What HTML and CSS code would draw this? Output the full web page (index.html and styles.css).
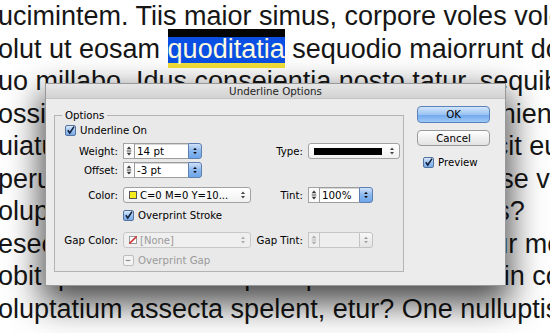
FILE: index.html
```html
<!DOCTYPE html>
<html lang="en">
<head>
  <meta charset="UTF-8">
  <title>Underline Options</title>
  <link rel="stylesheet" href="styles.css">
</head>
<body>
  <div class="page">
    <div class="story">
      <p class="line">ucimintem. Tiis maior simus, corpore voles volo</p>
      <p class="line">olut ut eosam <span class="sel">quoditatia</span> sequodio maiorrunt dol</p>
      <p class="line">uo millabo. Idus conseientia nosto tatur, sequibus</p>
      <p class="line">ossimus, sequi ommolorem quam reprae inienit</p>
      <p class="line">uiatur, sint, tem quiaes aut accus quos ducit eum</p>
      <p class="line">perum nes ut ea conseque pro sit offictae se vel</p>
      <p class="line">olupta tiunt quam, si di is rerum qui eos nis?</p>
      <p class="line">esecab oribus ipsunt aut laborrum sequatur mo</p>
      <p class="line">obit quatatur eum in premperam rerum sotin co</p>
      <p class="line">oluptatium assecta spelent, etur? One nulluptis</p>
    </div>

    <div class="dialog">
      <div class="titlebar">Underline Options</div>
      <div class="dialog-body">
        <fieldset class="group">
          <legend>Options</legend>

          <div class="row row-check">
            <span class="check on"><svg width="11" height="11" viewBox="0 0 11 11"><path d="M2.2 5.2 L4.6 8.6 L9.8 0.8" fill="none" stroke="#13233f" stroke-width="1.9"/></svg></span>
            <span>Underline On</span>
          </div>

          <div class="row row-weight">
            <span class="lbl">Weight:</span>
            <span class="spin">
              <span class="stepper"><svg width="11" height="14" viewBox="0 0 11 14"><polygon points="5.5,2 3,5 8,5" fill="#333"/><path d="M3 7 H8" stroke="#333"/><polygon points="3,9 8,9 5.5,12" fill="#333"/></svg></span>
              <span class="field">14 pt</span>
              <span class="drop"><svg width="13" height="14" viewBox="0 0 13 14"><polygon points="6.5,3.5 4.5,6 8.5,6" fill="#111"/><polygon points="4.5,8 8.5,8 6.5,10.5" fill="#111"/></svg></span>
            </span>
            <span class="lbl">Type:</span>
            <span class="popup">
              <span class="stroke-sample"></span>
              <svg class="arrows" width="6" height="12" viewBox="0 0 6 12"><polygon points="3,2.5 1,5 5,5" fill="#444"/><polygon points="1,7 5,7 3,9.5" fill="#444"/></svg>
            </span>
          </div>

          <div class="row row-offset">
            <span class="lbl">Offset:</span>
            <span class="spin">
              <span class="stepper"><svg width="11" height="14" viewBox="0 0 11 14"><polygon points="5.5,2 3,5 8,5" fill="#333"/><path d="M3 7 H8" stroke="#333"/><polygon points="3,9 8,9 5.5,12" fill="#333"/></svg></span>
              <span class="field">-3 pt</span>
              <span class="drop"><svg width="13" height="14" viewBox="0 0 13 14"><polygon points="6.5,3.5 4.5,6 8.5,6" fill="#111"/><polygon points="4.5,8 8.5,8 6.5,10.5" fill="#111"/></svg></span>
            </span>
          </div>

          <div class="row row-color">
            <span class="lbl">Color:</span>
            <span class="popup wide">
              <span class="swatch yellow"></span>
              <span class="popup-text">C=0 M=0 Y=10...</span>
              <svg class="arrows" width="6" height="12" viewBox="0 0 6 12"><polygon points="3,2.5 1,5 5,5" fill="#444"/><polygon points="1,7 5,7 3,9.5" fill="#444"/></svg>
            </span>
            <span class="lbl">Tint:</span>
            <span class="spin tint">
              <span class="stepper"><svg width="11" height="14" viewBox="0 0 11 14"><polygon points="5.5,2 3,5 8,5" fill="#333"/><path d="M3 7 H8" stroke="#333"/><polygon points="3,9 8,9 5.5,12" fill="#333"/></svg></span>
              <span class="field">100%</span>
              <span class="drop"><svg width="13" height="14" viewBox="0 0 13 14"><polygon points="6.5,3.5 4.5,6 8.5,6" fill="#111"/><polygon points="4.5,8 8.5,8 6.5,10.5" fill="#111"/></svg></span>
            </span>
          </div>

          <div class="row row-stroke">
            <span></span>
            <span class="check-label">
              <span class="check on"><svg width="11" height="11" viewBox="0 0 11 11"><path d="M2.2 5.2 L4.6 8.6 L9.8 0.8" fill="none" stroke="#13233f" stroke-width="1.9"/></svg></span>
              <span>Overprint Stroke</span>
            </span>
          </div>

          <div class="row row-gap">
            <span class="lbl">Gap Color:</span>
            <span class="popup wide disabled">
              <span class="swatch none"><svg width="8" height="8" viewBox="0 0 8 8"><path d="M0 8 L8 0" stroke="#d23b3b" stroke-width="1.6"/></svg></span>
              <span class="popup-text">[None]</span>
              <svg class="arrows" width="6" height="12" viewBox="0 0 6 12"><polygon points="3,2.5 1,5 5,5" fill="#aaa"/><polygon points="1,7 5,7 3,9.5" fill="#aaa"/></svg>
            </span>
            <span class="lbl">Gap Tint:</span>
            <span class="spin tint disabled">
              <span class="stepper"><svg width="11" height="14" viewBox="0 0 11 14"><polygon points="5.5,2 3,5 8,5" fill="#aaa"/><path d="M3 7 H8" stroke="#aaa"/><polygon points="3,9 8,9 5.5,12" fill="#aaa"/></svg></span>
              <span class="field"></span>
              <span class="drop"><svg width="13" height="14" viewBox="0 0 13 14"><polygon points="6.5,3.5 4.5,6 8.5,6" fill="#999"/><polygon points="4.5,8 8.5,8 6.5,10.5" fill="#999"/></svg></span>
            </span>
          </div>

          <div class="row row-ogap">
            <span></span>
            <span class="check-label disabled">
              <span class="check mixed"><svg width="11" height="11" viewBox="0 0 11 11"><path d="M3 5.5 H8" stroke="#888" stroke-width="1.2"/></svg></span>
              <span>Overprint Gap</span>
            </span>
          </div>
        </fieldset>

        <div class="side">
          <button class="btn default">OK</button>
          <button class="btn">Cancel</button>
          <div class="preview">
            <span class="check on"><svg width="11" height="11" viewBox="0 0 11 11"><path d="M2.2 5.2 L4.6 8.6 L9.8 0.8" fill="none" stroke="#13233f" stroke-width="1.9"/></svg></span>
            <span>Preview</span>
          </div>
        </div>
      </div>
    </div>
  </div>
</body>
</html>
```

FILE: styles.css
```css
body {
  margin: 0;
  background: #fff;
  overflow: hidden;
}

.page {
  position: relative;
  width: 550px;
  height: 333px;
  overflow: hidden;
}

/* story text behind the dialog */
.story {
  margin-left: -2px;
  font-family: "Liberation Sans", Arial, sans-serif;
  font-size: 27px;
  color: #161616;
}

.line {
  margin: 0;
  line-height: 32.5px;
  white-space: nowrap;
}

.sel {
  color: #fffbe0;
  padding: 4.5px 0 4px;
  background: linear-gradient(#050505 0, #050505 8px, #0a50e4 8px, #0a50e4 34px, #f4e03a 34px);
}

/* dialog */
.dialog {
  position: absolute;
  left: 45px;
  top: 83px;
  width: 461px;
  height: 203px;
  box-sizing: border-box;
  background: #ececec;
  border: 1px solid rgba(0, 0, 0, 0.35);
  box-shadow: 0 14px 32px 4px rgba(0, 0, 0, 0.7);
  font-family: "DejaVu Sans", sans-serif;
  font-size: 10.2px;
  color: #000;
}

.titlebar {
  height: 14px;
  line-height: 14px;
  text-align: center;
  font-size: 10.3px;
  color: #222;
  background: linear-gradient(#e6e6e6, #d2d2d2);
  border-bottom: 1px solid #c2c2c2;
}

.dialog-body {
  display: flex;
  padding-left: 8px;
}

.group {
  width: 350px;
  box-sizing: border-box;
  margin: 9.5px 0 0;
  padding: 0 3px 2.5px 0;
  border: 1px solid #b4b4b4;
  background: #e9e9e9;
  min-width: 0;
}

.group legend {
  margin-left: 7px;
  padding: 0 3px;
  line-height: 13px;
  font-size: 10.2px;
}

.row {
  display: grid;
  grid-template-columns: 63px 128px 47px 92px;
  column-gap: 5px;
  align-items: center;
  height: 16px;
}

.lbl {
  text-align: right;
  white-space: nowrap;
}

.row-check {
  display: flex;
  gap: 4px;
  padding-left: 10px;
  margin-top: 1px;
}
.row-weight { margin-top: 4.5px; }
.row-offset { margin-top: 3px; }
.row-color { margin-top: 9px; }
.row-stroke { margin-top: 4.5px; }
.row-gap { margin-top: 8.5px; }
.row-ogap { margin-top: 4.5px; }

.check-label {
  display: flex;
  align-items: center;
  gap: 4px;
  white-space: nowrap;
}

.check {
  width: 11px;
  height: 11px;
  box-sizing: border-box;
  border-radius: 2px;
  display: flex;
  flex: none;
}

.check svg {
  margin: -1px 0 0 0;
}

.check.on {
  border: 1px solid #53739f;
  background: linear-gradient(#dbe9fb, #9cc3f0 50%, #79acea);
}

.check.mixed {
  border: 1px solid #bdbdbd;
  background: #f3f3f3;
}

.check.mixed svg {
  margin: -1px 0 0 -1px;
}

.disabled {
  color: #9a9a9a;
}

/* spinner: stepper + field + blue menu button */
.spin {
  display: flex;
  height: 16px;
  width: 79px;
}

.stepper {
  width: 11px;
  box-sizing: border-box;
  border: 1px solid #a3a3a3;
  border-right: none;
  background: #fafafa;
  display: flex;
  align-items: center;
}

.field {
  flex: 1;
  box-sizing: border-box;
  border: 1px solid #9c9c9c;
  border-right: none;
  background: #fff;
  box-shadow: inset 0 1px 0 #d6d6d6;
  padding-left: 2px;
  line-height: 14px;
  font-size: 10.3px;
}

.drop {
  width: 14px;
  box-sizing: border-box;
  border: 1px solid #5c7fb0;
  border-radius: 0 3px 3px 0;
  background: linear-gradient(#cfe1f8, #8ab8ee 50%, #6ea6ea);
  display: flex;
  align-items: center;
}

.spin.tint {
  width: 65px;
}

.spin.disabled .stepper,
.spin.disabled .field {
  background: #eeeeee;
  border-color: #c6c6c6;
  box-shadow: none;
}

.spin.disabled .drop {
  border-color: #c2c2c2;
  background: linear-gradient(#f7f7f7, #e4e4e4);
}

/* popup menus */
.popup {
  display: flex;
  align-items: center;
  height: 16px;
  box-sizing: border-box;
  border: 1px solid #a2a2a2;
  border-radius: 3px;
  background: linear-gradient(#ffffff, #f1f1f1);
  padding: 0 4px 0 5px;
}

.popup .arrows {
  margin-left: auto;
}

.stroke-sample {
  width: 68px;
  height: 7px;
  background: #000;
}

.swatch {
  width: 8px;
  height: 8px;
  box-sizing: border-box;
  border: 1px solid #555;
  margin-right: 3px;
  display: flex;
}

.swatch.yellow {
  background: #f7ea1c;
}

.swatch.none {
  background: #fff;
  border-color: #999;
}

.swatch.none svg {
  margin: -1px;
}

.popup-text {
  white-space: nowrap;
  font-size: 10px;
}

.popup.disabled {
  border-color: #c8c8c8;
  background: #efefef;
}

/* right column */
.side {
  display: flex;
  flex-direction: column;
  width: 73px;
  margin-left: 13px;
  padding-top: 7px;
}

.btn {
  height: 16px;
  padding: 0;
  border: 1px solid #9a9a9a;
  border-radius: 4px;
  background: linear-gradient(#ffffff, #f0f0f0 50%, #e2e2e2);
  font-family: "DejaVu Sans", sans-serif;
  font-size: 10.2px;
  color: #000;
  margin-top: 7px;
}

.btn.default {
  height: 17px;
  margin-top: 0;
  border-color: #5a82bb;
  background: linear-gradient(#d3e5fa, #9ac3f2 50%, #6fa8ee 51%, #9dc8f6);
}

.preview {
  display: flex;
  align-items: center;
  gap: 4px;
  height: 16px;
  margin-top: 8.5px;
  padding-left: 6px;
}
```
